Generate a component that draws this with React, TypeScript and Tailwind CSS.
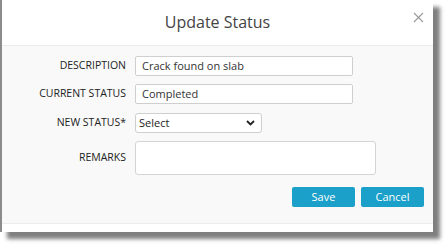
import React from "react";

const Row = ({ label, children }: { label: string; children: React.ReactNode }) => (
  <div className="flex items-center">
    <div className="w-[125px] pr-[1px] text-right text-[10.5px] text-[#222] uppercase">{label}</div>
    <div className="ml-[8px]">{children}</div>
  </div>
);

export default function App() {
  return (
    <div className="w-[448px] h-[247px] bg-white font-['Open_Sans',sans-serif]">
      <div className="w-[433px] h-[232px] flex flex-col bg-white border-l-2 border-[#8c8c8c] shadow-[7px_7px_4px_rgba(0,0,0,0.5)]">
        <div className="relative h-[46px] shrink-0 flex items-center justify-center border-b border-[#ececec]">
          <span className="text-[16px] text-[#444] -mt-[2px]">Update Status</span>
          <svg className="absolute right-[9px] top-[12px]" width="11" height="11" viewBox="0 0 11 11">
            <path d="M1 1L10 10M10 1L1 10" stroke="#9a9a9a" strokeWidth="1.1" />
          </svg>
        </div>
        <div className="flex-1 bg-[#f9f9f9] border-b border-[#ececec] pt-[10px] flex flex-col">
          <div className="flex flex-col gap-[8px]">
            <Row label="Description">
              <div className="w-[218px] h-[20px] bg-white border border-[#cfcfcf] rounded-[2px] px-[6px] flex items-center text-[11px] text-[#333]">
                Crack found on slab
              </div>
            </Row>
            <Row label="Current Status">
              <div className="w-[218px] h-[20px] bg-white border border-[#cfcfcf] rounded-[2px] px-[6px] flex items-center text-[11px] text-[#333]">
                Completed
              </div>
            </Row>
            <div className="mt-[1px]">
              <Row label="New Status*">
                <div className="w-[127px] h-[20px] bg-white border border-[#cfcfcf] rounded-[3px] pl-[3px] pr-[6px] flex items-center justify-between text-[11px] text-[#222]">
                  <span>Select</span>
                  <svg width="9" height="6" viewBox="0 0 9 6">
                    <path d="M1 1L4.5 4.5L8 1" fill="none" stroke="#222" strokeWidth="1.8" />
                  </svg>
                </div>
              </Row>
            </div>
            <Row label="Remarks">
              <div className="w-[241px] h-[34px] bg-white border border-[#d4d4d4] rounded-[3px]" />
            </Row>
          </div>
          <div className="flex justify-end gap-[6px] mt-[12px] pr-[9px]">
            <button className="w-[63px] h-[20px] bg-[#1aa0c9] rounded-[2px] text-white text-[11px]">Save</button>
            <button className="w-[63px] h-[20px] bg-[#1aa0c9] rounded-[2px] text-white text-[11px]">Cancel</button>
          </div>
        </div>
        <div className="h-[8px] shrink-0 bg-white" />
      </div>
    </div>
  );
}
